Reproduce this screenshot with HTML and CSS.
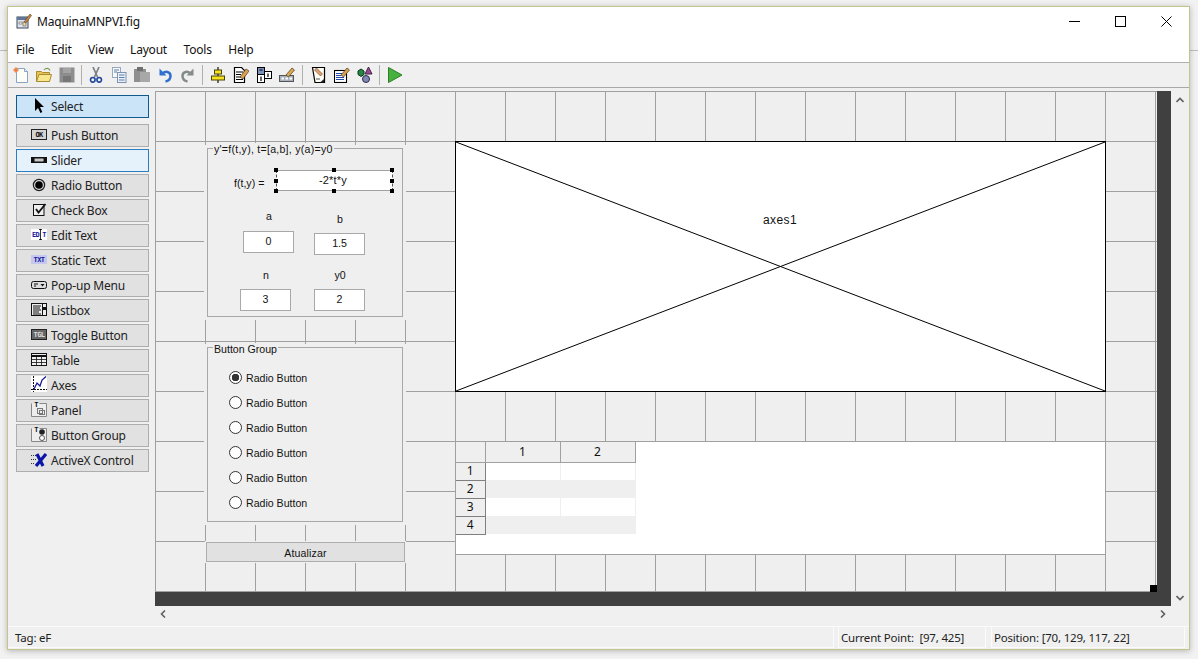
FILE: index.html
```html
<!DOCTYPE html>
<html lang="en">
<head>
<meta charset="utf-8">
<title>MaquinaMNPVI.fig</title>
<link rel="stylesheet" href="styles.css">
</head>
<body>
<div class="window">
  <header class="titlebar">
    <svg class="app-icon" viewBox="0 0 16 16" width="16" height="16"><rect x="1" y="4" width="11" height="11" fill="#dfe6ee" stroke="#3c4658"/><rect x="1" y="4" width="11" height="3" fill="#5f7698"/><rect x="3" y="9" width="3" height="2" fill="#fff" stroke="#444" stroke-width=".5"/><rect x="7" y="9" width="3" height="4" fill="#f3d9a0" stroke="#444" stroke-width=".5"/><path d="M8 9 14 1l1.500 1.500L10 10z" fill="#c9843a" stroke="#5c4526" stroke-width=".6"/></svg>
    <span class="title">MaquinaMNPVI.fig</span>
    <div class="win-controls">
      <svg viewBox="0 0 11 11" width="11" height="11"><path d="M0 5.500H11" stroke="#000" fill="none"/></svg>
      <svg viewBox="0 0 11 11" width="11" height="11"><rect x=".5" y=".5" width="10" height="10" stroke="#000" fill="none"/></svg>
      <svg viewBox="0 0 11 11" width="11" height="11"><path d="M.5 .5 10.500 10.500M10.500 .5 .5 10.500" stroke="#000" fill="none"/></svg>
    </div>
  </header>
  <nav class="menubar"><span>File</span><span>Edit</span><span>View</span><span>Layout</span><span>Tools</span><span>Help</span></nav>
  <div class="toolbar">
    <span class="tool"><svg viewBox="0 0 16 16"><path d="M3.500 1.500h8l3 3v11h-11z" fill="#fffef6" stroke="#86a4c4"/><path d="M11.500 1.500v3h3" fill="#e8eef5" stroke="#86a4c4"/><circle cx="3" cy="3" r="2.200" fill="#f0a060"/><path d="M3 0v6M0 3h6" stroke="#e5703a" stroke-width=".8"/></svg></span>
    <span class="tool"><svg viewBox="0 0 16 16"><path d="M.5 14.500v-10h5l1 1h7v9z" fill="#e8c350" stroke="#a98a35"/><path d="M.5 14.500l2.500-7h12.500l-2 7z" fill="#f9e78e" stroke="#a98a35"/><path d="M8 3c2-2.500 5-2 6 .5" fill="none" stroke="#7f9c52" stroke-width="1.200"/></svg></span>
    <span class="tool"><svg viewBox="0 0 16 16"><rect x=".5" y=".5" width="15" height="15" fill="#8d8d8d"/><rect x="4" y="1" width="8" height="5" fill="#a3a3a3"/><rect x="4" y="9" width="8" height="6" fill="#777"/></svg></span>
    <span class="sep sep-narrow"></span>
    <span class="tool"><svg viewBox="0 0 16 16"><path d="M5 0l4.500 10M11 0 6.500 10" stroke="#7c8288" stroke-width="1.700" fill="none"/><circle cx="4.800" cy="12.800" r="2.300" fill="none" stroke="#2347a0" stroke-width="1.600"/><circle cx="11.200" cy="12.800" r="2.300" fill="none" stroke="#2347a0" stroke-width="1.600"/></svg></span>
    <span class="tool"><svg viewBox="0 0 16 16"><rect x="1.500" y=".5" width="8" height="10" fill="#f4f7fb" stroke="#9aa8bb"/><rect x="6.500" y="5.500" width="8.500" height="10" fill="#eaf1fa" stroke="#7f92ad"/><path d="M3 3h5M3 5h3M8 8h5.500M8 10.500h5.500M8 13h5.500" stroke="#5f7ca8"/></svg></span>
    <span class="tool"><svg viewBox="0 0 16 16"><rect x="0" y="2" width="12" height="13" fill="#8f8f8f"/><rect x="3" y="0" width="6" height="4" fill="#6f6f6f"/><rect x="6" y="5" width="10" height="10" fill="#a8a8a8"/></svg></span>
    <span class="tool"><svg viewBox="0 0 16 16"><path d="M2.500 1.500v7h7z" fill="#2f6fd0"/><path d="M5 7c3-3.500 8.500-2.500 8.500 2 0 3-2.500 5-5 5.500" fill="none" stroke="#2f6fd0" stroke-width="2.500"/></svg></span>
    <span class="tool"><svg viewBox="0 0 16 16"><path d="M13.500 1.500v7h-7z" fill="#858a8a"/><path d="M11 7c-3-3.500-8.500-2.500-8.500 2 0 3 2.500 5 5 5.500" fill="none" stroke="#858a8a" stroke-width="2.500"/></svg></span>
    <span class="sep"></span>
    <span class="tool"><svg viewBox="0 0 16 16"><path d="M8 0v16" stroke="#111" stroke-width="1.200"/><rect x="4.500" y="3" width="7" height="4" fill="#f6e220" stroke="#4a4400"/><rect x="1.500" y="9" width="13" height="4" fill="#f6e220" stroke="#4a4400"/></svg></span>
    <span class="tool"><svg viewBox="0 0 16 16"><path d="M1.500 .5h7l3 3v12h-10z" fill="#fff" stroke="#000" stroke-width="1.200"/><path d="M3 5h7M3 7.500h5M3 10h5M3 12.500h7" stroke="#000" stroke-width="1.100"/><path d="M7 10l6-8 3 2-6 8z" fill="#d9a050" stroke="#4c3820" stroke-width=".7"/></svg></span>
    <span class="tool"><svg viewBox="0 0 16 16"><rect x="1.500" y=".5" width="7" height="7" fill="#7f92be" stroke="#000"/><rect x="1.500" y="7.500" width="7" height="8" fill="#fff" stroke="#000"/><rect x="8.500" y="4.500" width="7" height="7" fill="#fff" stroke="#000"/><path d="M5 9.500v4.500M12 6.500v3.500M3.500 3h3" stroke="#000" stroke-width="1.200"/></svg></span>
    <span class="tool"><svg viewBox="0 0 16 16"><rect x=".5" y="8.500" width="14" height="6" fill="#a8b0bc" stroke="#555"/><path d="M2.500 10.500h2.500v2H2.500zM6.500 10.500H9v2H6.500zM10.500 10.500H13v2h-2.500z" fill="#fff"/><path d="M7 8l6-7 2.500 2-6 7z" fill="#dba94e" stroke="#4c3820" stroke-width=".7"/></svg></span>
    <span class="sep sep-wide"></span>
    <span class="tool"><svg viewBox="0 0 16 16"><path d="M1.500 .5h12v15H4z" fill="#fdfdf4" stroke="#000" stroke-width="1.200"/><path d="M13 12v3.500h-4z" fill="#222"/><path d="M3.500 3l6 6 2-2-6-6z" fill="#e0a070" stroke="#7a5030" stroke-width=".7"/><path d="M5 12h4" stroke="#555"/></svg></span>
    <span class="tool"><svg viewBox="0 0 16 16"><rect x=".5" y="3.500" width="12" height="12" fill="#fff" stroke="#000" stroke-width="1.100"/><path d="M2 6.500h6M2 8.500h5M2 10.500h8M2 12.500h8" stroke="#2048a8" stroke-width="1.100"/><path d="M7 8l6-7 2.500 2-6 7z" fill="#d9a050" stroke="#4c3820" stroke-width=".7"/></svg></span>
    <span class="tool"><svg viewBox="0 0 16 16"><path d="M1 4l3-2 3 2v3.500l-3 2-3-2z" fill="#22883f" stroke="#0c3320"/><path d="M11.500 0l3.500 7H8z" fill="#9a4a94" stroke="#402040"/><circle cx="9" cy="12" r="3.500" fill="#8088b8" stroke="#2a2c44"/></svg></span>
    <span class="sep"></span>
    <span class="tool"><svg viewBox="0 0 16 16"><path d="M1.500 .5 15 8 1.500 15.500z" fill="#46b13c" stroke="#2e7d2a"/></svg></span>
  </div>
  <div class="main">
    <aside class="palette">
      <div class="pal pal-select"><span class="pal-icon"><svg viewBox="0 0 16 16"><path d="M4 0v13l3-3 2.500 5 1.800-1L9 9h4z" fill="#000"/></svg></span>Select</div>
      <div class="pal"><span class="pal-icon"><svg viewBox="0 0 16 12"><rect x=".5" y=".5" width="15" height="10" fill="#d4d4d4" stroke="#222"/><text x="8" y="8" class="ico-text">OK</text></svg></span>Push Button</div>
      <div class="pal pal-hover"><span class="pal-icon"><svg viewBox="0 0 16 12"><rect y="3" width="16" height="6" fill="#111"/><rect x="3.500" y="4.500" width="9" height="3" fill="#c8c8c8"/></svg></span>Slider</div>
      <div class="pal"><span class="pal-icon"><svg viewBox="0 0 16 14"><circle cx="8" cy="7" r="5.600" fill="#ddd" stroke="#222" stroke-width="1.300"/><circle cx="8" cy="7" r="3.800" fill="#000"/></svg></span>Radio Button</div>
      <div class="pal"><span class="pal-icon"><svg viewBox="0 0 16 14"><rect x="2.500" y="1.500" width="10.500" height="11" fill="#eee" stroke="#111"/><path d="M5 6l2.500 3.500L14.500 1" fill="none" stroke="#111" stroke-width="1.800"/></svg></span>Check Box</div>
      <div class="pal"><span class="pal-icon"><svg viewBox="0 0 16 12"><rect width="16" height="11" fill="#fff"/><text x="4.500" y="8" class="ico-text ico-blue">ED</text><text x="13" y="8" class="ico-text ico-blue">T</text><path d="M9.500 0v11M8 .5h3M8 10.500h3" stroke="#000" stroke-width=".8"/></svg></span>Edit Text</div>
      <div class="pal"><span class="pal-icon"><svg viewBox="0 0 16 12"><rect y="1" width="16" height="9" fill="#c4c8ee"/><text x="8" y="8" class="ico-text ico-blue">TXT</text></svg></span>Static Text</div>
      <div class="pal"><span class="pal-icon"><svg viewBox="0 0 16 12"><rect x=".5" y="2.500" width="15" height="7" rx="2" fill="#ddd" stroke="#111"/><path d="M3 5h4M3 7h2" stroke="#111"/><path d="M9.500 5h4l-2 2.500z" fill="#111"/></svg></span>Pop-up Menu</div>
      <div class="pal"><span class="pal-icon"><svg viewBox="0 0 16 14"><rect x=".5" y=".5" width="15" height="12" fill="#eee" stroke="#111"/><path d="M2 3h8M2 5h7M2 7h8M2 9h6M2 11h8" stroke="#111"/><path d="M11.500 0v13" stroke="#111"/><rect x="12" y="4" width="3" height="3" fill="#111"/></svg></span>Listbox</div>
      <div class="pal"><span class="pal-icon"><svg viewBox="0 0 16 12"><rect x=".5" y=".5" width="15" height="10" fill="#666" stroke="#222"/><text x="8" y="8" class="ico-text ico-light">TGL</text></svg></span>Toggle Button</div>
      <div class="pal"><span class="pal-icon"><svg viewBox="0 0 16 14"><rect x=".5" y=".5" width="15" height="12" fill="#eee" stroke="#111"/><path d="M0 3h16" stroke="#111" stroke-width="2"/><path d="M1 6.500h14M1 9.500h14M5.500 3v9M10.500 3v9" stroke="#111" stroke-width=".8"/></svg></span>Table</div>
      <div class="pal pal-tall"><span class="pal-icon"><svg viewBox="0 0 16 16"><rect width="16" height="16" fill="#fff"/><path d="M2.500 0v16M0 13.500h16" stroke="#111" stroke-dasharray="2 1"/><path d="M3 13l3-6 3 3 2-6 4-3.500" fill="none" stroke="#1a1a9a" stroke-width="1.300"/></svg></span>Axes</div>
      <div class="pal pal-tall"><span class="pal-icon"><svg viewBox="0 0 16 16"><path d="M.5 2.500v13h15v-13h-7" fill="#eee" stroke="#888"/><text x="5" y="6" class="ico-text">T</text><rect x="6.500" y="7.500" width="5" height="5" fill="none" stroke="#777"/><rect x="8.500" y="9.500" width="5" height="4" fill="none" stroke="#777"/></svg></span>Panel</div>
      <div class="pal pal-tall"><span class="pal-icon"><svg viewBox="0 0 16 16"><path d="M.5 2.500v13h15v-13h-7" fill="#eee" stroke="#888"/><text x="5" y="6" class="ico-text">T</text><circle cx="11" cy="6" r="2.800" fill="#222"/><circle cx="11" cy="12" r="2.500" fill="#fff" stroke="#555"/></svg></span>Button Group</div>
      <div class="pal"><span class="pal-icon"><svg viewBox="0 0 16 14"><path d="M0 2.500h5M0 6.500h5M0 10.500h4" stroke="#333" stroke-dasharray="1 1"/><path d="M6 1l6 12M15 1 5 13" stroke="#0a14a8" stroke-width="3.200" fill="none"/></svg></span>ActiveX Control</div>
    </aside>
    <div class="workspace">
      <div class="canvas">
        <section class="panel panel-ode"><span class="panel-title">y'=f(t,y), t=[a,b], y(a)=y0</span></section>
        <span class="lbl lbl-f">f(t,y) =</span>
        <div class="field-selected">-2*t*y
          <i class="h h-tl"></i><i class="h h-tc"></i><i class="h h-tr"></i>
          <i class="h h-ml"></i><i class="h h-mr"></i>
          <i class="h h-bl"></i><i class="h h-bc"></i><i class="h h-br"></i>
        </div>
        <span class="lbl lbl-c lbl-a">a</span>
        <span class="lbl lbl-c lbl-b">b</span>
        <span class="lbl lbl-c lbl-n">n</span>
        <span class="lbl lbl-c lbl-y0">y0</span>
        <div class="edit edit-a">0</div>
        <div class="edit edit-b">1.5</div>
        <div class="edit edit-n">3</div>
        <div class="edit edit-y0">2</div>

        <section class="panel panel-group"><span class="panel-title">Button Group</span></section>
        <div class="radio-list">
          <div class="radio radio-on"><i></i>Radio Button</div>
          <div class="radio"><i></i>Radio Button</div>
          <div class="radio"><i></i>Radio Button</div>
          <div class="radio"><i></i>Radio Button</div>
          <div class="radio"><i></i>Radio Button</div>
          <div class="radio"><i></i>Radio Button</div>
        </div>
        <div class="update-btn">Atualizar</div>

        <div class="axes">
          <svg class="axes-x" viewBox="0 0 649 249" preserveAspectRatio="none"><path d="M0 0 649 249M649 0 0 249" stroke="#000" fill="none"/></svg>
          <span class="axes-label">axes1</span>
        </div>

        <div class="table-wrap">
          <table class="uitable">
            <thead><tr><th class="corner"></th><th>1</th><th>2</th></tr></thead>
            <tbody>
              <tr><th>1</th><td></td><td></td></tr>
              <tr><th>2</th><td></td><td></td></tr>
              <tr><th>3</th><td></td><td></td></tr>
              <tr><th>4</th><td></td><td></td></tr>
            </tbody>
          </table>
        </div>
        <i class="resize-handle"></i>
      </div>
    </div>
    <div class="vscroll">
      <svg class="chev" viewBox="0 0 8 6" width="8" height="6"><path d="M.5 5 4 1.500 7.500 5" fill="none" stroke="#606060" stroke-width="1.600"/></svg>
      <svg class="chev" viewBox="0 0 8 6" width="8" height="6"><path d="M.5 1 4 4.500 7.500 1" fill="none" stroke="#606060" stroke-width="1.600"/></svg>
    </div>
  </div>
  <div class="hscroll">
    <svg viewBox="0 0 6 8" width="6" height="8"><path d="M5 .5 1.500 4 5 7.500" fill="none" stroke="#606060" stroke-width="1.600"/></svg>
    <svg viewBox="0 0 6 8" width="6" height="8"><path d="M1 .5 4.500 4 1 7.500" fill="none" stroke="#606060" stroke-width="1.600"/></svg>
  </div>
  <footer class="statusbar">
    <div class="st st-tag">Tag: eF</div>
    <div class="st st-point">Current Point:&nbsp; [97, 425]</div>
    <div class="st st-pos">Position: [70, 129, 117, 22]</div>
  </footer>
</div>
</body>
</html>
```
FILE: styles.css
```css
* { box-sizing: border-box; }
html, body { margin: 0; height: 100%; }
body {
  width: 1198px;
  height: 659px;
  overflow: hidden;
  padding: 6px 0 0 7px;
  background: linear-gradient(#bdbdbd, #bdbdbd) 0 50px / 100% 1px no-repeat, #f2f2f2;
  font-family: "Noto Sans", "Open Sans", sans-serif;
  font-size: 12px;
  letter-spacing: -.2px;
  color: #222;
}
.window {
  width: 1183px;
  height: 644px;
  display: flex;
  flex-direction: column;
  background: #f0f0f0;
  border: 1px solid #c4c48c;
  box-shadow: 0 1px 6px rgba(0, 0, 0, .25);
}
.titlebar {
  height: 31px;
  flex: none;
  display: flex;
  align-items: center;
  background: #fff;
  padding: 0 0 3px 8px;
  color: #111;
}
.app-icon { flex: none; }
.title { margin-left: 5px; }
.win-controls {
  margin-left: auto;
  display: flex;
  gap: 35px;
  margin-right: 17px;
}
.menubar {
  height: 24px;
  flex: none;
  display: flex;
  align-items: center;
  gap: 16.500px;
  background: #fff;
  padding: 0 0 2px 8px;
  color: #111;
}
.toolbar {
  height: 26px;
  flex: none;
  display: flex;
  align-items: center;
  padding-left: 1px;
  border-top: 1px solid #b0b0b0;
  border-bottom: 1px solid #a8a8a8;
}
.tool {
  width: 23px;
  height: 16px;
  display: flex;
  justify-content: center;
}
.tool svg { width: 16px; height: 16px; }
.sep {
  width: 7px;
  height: 20px;
  display: flex;
  justify-content: center;
}
.sep-narrow { width: 6px; }
.sep-wide { width: 9px; }
.sep::before { content: ""; width: 1px; background: #b0b0b0; }
.main { flex: none; height: 518px; display: flex; }
.palette {
  width: 147px;
  flex: none;
  padding: 7px 6px 0 8px;
  display: flex;
  flex-direction: column;
  gap: 2px;
}
.pal {
  height: 23px;
  flex: none;
  display: flex;
  align-items: center;
  background: #e1e1e1;
  border: 1px solid #adadad;
  color: #222;
}
.pal-select { background: #cce4f7; border-color: #105a91; margin-bottom: 4px; }
.pal-hover { background: #e5f1fb; border-color: #2b7fc0; }
.pal-icon {
  width: 16px;
  height: 16px;
  margin: -2px 4px 0 14px;
  display: flex;
  align-items: center;
  flex: none;
}
.pal-tall .pal-icon { margin-top: -3px; }
.pal-icon svg { width: 16px; height: auto; display: block; }
.ico-text {
  font-family: "DejaVu Sans Mono", monospace;
  font-size: 7px;
  font-weight: 700;
  letter-spacing: -.6px;
  text-anchor: middle;
  fill: #111;
}
.ico-blue { fill: #1a1a9a; }
.ico-light { fill: #ddd; }
.workspace { width: 1016px; flex: none; padding-top: 3px; }
.canvas {
  position: relative;
  width: 1016px;
  height: 515px;
  border-right: 14px solid #404040;
  border-bottom: 14px solid #404040;
  background-color: #efefef;
  background-image:
    linear-gradient(to right, #a0a0a0 1px, transparent 1px),
    linear-gradient(to bottom, #a0a0a0 1px, transparent 1px);
  background-size: 50px 50px;
  background-clip: padding-box;
  font-family: "Liberation Sans", Arial, sans-serif;
  font-size: 10.600px;
  letter-spacing: 0;
  color: #111;
}
.panel {
  position: absolute;
  left: 52px;
  width: 196px;
  background: #efefef;
  border: 1px solid #a8a8a8;
  outline: 3px solid #efefef;
}
.panel-ode { top: 57px; height: 169px; }
.panel-group { top: 256px; height: 175px; }
.panel-title {
  position: absolute;
  left: 5px;
  top: -5px;
  padding: 0 1px;
  line-height: 12px;
  background: #efefef;
}
.panel-ode .panel-title { top: -6px; letter-spacing: .25px; }
.lbl { position: absolute; line-height: 14px; }
.lbl-c { width: 40px; text-align: center; }
.lbl-f { left: 79px; top: 85px; }
.lbl-a { left: 94px; top: 118px; }
.lbl-b { left: 165px; top: 121px; }
.lbl-n { left: 91px; top: 177px; }
.lbl-y0 { left: 165px; top: 177px; }
.field-selected {
  position: absolute;
  left: 121px;
  top: 79px;
  width: 117px;
  height: 21px;
  padding-right: 3px;
  background: #fff;
  border-top: 1px solid #a0a0a0;
  border-bottom: 1px solid #a0a0a0;
  border-left: 1px dashed #555;
  border-right: 1px dashed #555;
  text-align: center;
  font-size: 11px;
  letter-spacing: .2px;
  line-height: 19px;
}
.h { position: absolute; width: 4px; height: 4px; background: #000; }
.h-tl { left: -3px; top: -3px; }
.h-tc { left: 55px; top: -3px; }
.h-tr { right: -2px; top: -3px; }
.h-ml { left: -3px; top: 8px; }
.h-mr { right: -2px; top: 8px; }
.h-bl { left: -3px; bottom: -3px; }
.h-bc { left: 55px; bottom: -3px; }
.h-br { right: -2px; bottom: -3px; }
.edit {
  position: absolute;
  width: 51px;
  height: 22px;
  background: #fff;
  border: 1px solid #a8a8a8;
  text-align: center;
  line-height: 19px;
}
.edit-a { left: 88px; top: 140px; }
.edit-b { left: 159px; top: 142px; }
.edit-n { left: 85px; top: 198px; }
.edit-y0 { left: 159px; top: 198px; }
.radio-list { position: absolute; left: 74px; top: 274px; }
.radio { height: 25px; display: flex; align-items: center; gap: 4px; }
.radio i {
  width: 13px;
  height: 13px;
  border-radius: 50%;
  border: 1px solid #333;
  background: #fff;
  flex: none;
}
.radio-on i { background: radial-gradient(circle, #333 0 3.500px, #fff 4px); }
.update-btn {
  position: absolute;
  left: 51px;
  top: 451px;
  width: 199px;
  height: 20px;
  background: #e1e1e1;
  border: 1px solid #adadad;
  outline: 1px solid #efefef;
  text-align: center;
  letter-spacing: .15px;
  line-height: 20px;
}
.axes {
  position: absolute;
  left: 300px;
  top: 50px;
  width: 651px;
  height: 251px;
  background: #fff;
  border: 1px solid #000;
}
.axes-x { position: absolute; inset: 0; width: 100%; height: 100%; }
.axes-label {
  position: absolute;
  left: 307px;
  top: 71px;
  font-size: 12px;
  letter-spacing: .4px;
  line-height: 14px;
}
.table-wrap {
  position: absolute;
  left: 301px;
  top: 350px;
  width: 650px;
  height: 114px;
  background: #fff;
  border-top: 1px solid #a0a0a0;
  border-bottom: 1px solid #a0a0a0;
  border-right: 1px solid #a0a0a0;
}
.uitable {
  border-collapse: collapse;
  table-layout: fixed;
  width: 179px;
  font-family: "Noto Sans", sans-serif;
  font-size: 12px;
}
.uitable th, .uitable td { padding: 0; font-weight: 400; }
.uitable thead th {
  height: 20px;
  width: 75px;
  background: #efefef;
  border-right: 1px solid #a0a0a0;
  border-bottom: 1px solid #a0a0a0;
}
.uitable thead .corner { width: 29px; }
.uitable tbody th {
  height: 18px;
  background: #efefef;
  border-right: 1px solid #808080;
  border-bottom: 1px solid #808080;
  line-height: 14px;
}
.uitable td { border-right: 1px solid #efefef; }
.uitable tbody tr:nth-child(even) td { background: #efefef; }
.resize-handle {
  position: absolute;
  right: 0;
  bottom: 0;
  width: 7px;
  height: 7px;
  background: #000;
}
.vscroll {
  width: 18px;
  flex: none;
  display: flex;
  flex-direction: column;
  align-items: center;
  justify-content: space-between;
  padding: 9px 0 5px;
}
.hscroll {
  height: 21px;
  flex: none;
  display: flex;
  align-items: center;
  justify-content: space-between;
  padding: 0 23px 4px 152px;
  border-bottom: 1px solid #fbfbfb;
}
.statusbar {
  height: 22px;
  flex: none;
  display: flex;
  align-items: stretch;
  padding-bottom: 1px;
  font-size: 11.500px;
  color: #222;
}
.st {
  display: flex;
  align-items: center;
  border-bottom: 1px solid #fbfbfb;
  border-right: 1px solid #fbfbfb;
}
.st-tag { width: 826px; padding-left: 7px; }
.st-point { width: 148px; padding-left: 2px; margin-left: 4px; border-left: 1px solid #fbfbfb; }
.st-pos { flex: 1; padding-left: 2px; margin: 0 4px 0 5px; border-left: 1px solid #fbfbfb; }
```
